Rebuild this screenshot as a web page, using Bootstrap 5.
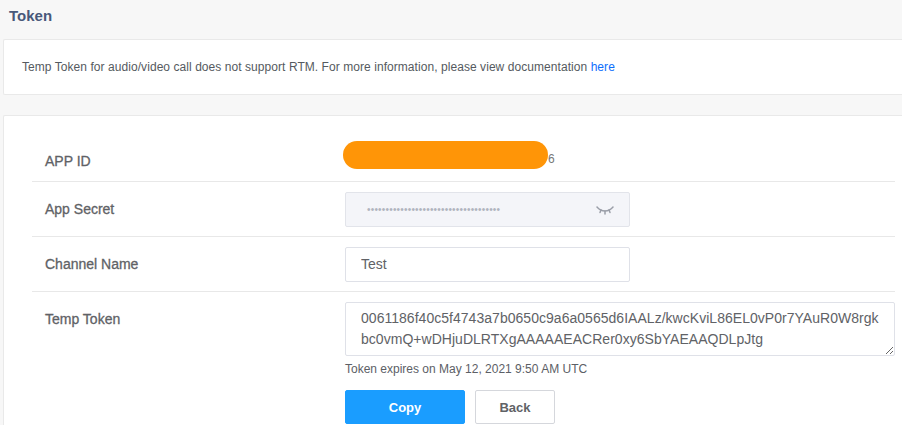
<!DOCTYPE html>
<html lang="en">
<head>
<meta charset="utf-8">
<title>Token</title>
<link href="https://cdn.jsdelivr.net/npm/bootstrap@5.3.0/dist/css/bootstrap.min.css" rel="stylesheet">
<style>
html, body { height: 425px; overflow: hidden; }
body { background: #f7f7f7; font-family: "Liberation Sans", Arial, sans-serif; color: #606266; font-size: 14px; }
.page-title { font-size: 15px; line-height: 18px; font-weight: 700; color: #48587a; margin: 0; padding: 7px 0 14px 9px; }
.panel { background: #fff; border: 1px solid #e9e9e9; border-right: 0; margin-left: 3px; border-radius: 2px 0 0 2px; }
.notice { height: 56px; padding-left: 18px; font-size: 12px; letter-spacing: .06px; color: #555a60; margin-bottom: 20px; }
.notice a { color: #0d6efd; text-decoration: none; }
.form-panel { padding: 16px 7px 0 28px; height: 320px; }
.form-line { display: flex; border-bottom: 1px solid #e8e8e8; }
.form-line:last-child { border-bottom: 0; }
.line-id { height: 50px; }
.line-field { height: 55px; padding-top: 10px; }
.line-token { padding-top: 10px; }
.field-label { width: 313px; flex: none; padding-left: 13px; font-size: 14px; font-weight: 400; -webkit-text-stroke: .3px #5f6266; color: #5f6266; line-height: 34px; }
.line-id .field-label { padding-top: 12px; }
.field-body { flex: 1 1 0; min-width: 0; }
.id-value { position: relative; font-size: 12px; color: #777; line-height: 14px; padding-top: 20px; padding-left: 203px; }
.id-mask { position: absolute; left: -2px; top: 9px; width: 205px; height: 28px; background: #ff9507; border-radius: 14px; }
.text-field.form-control { width: 285px; height: 35px; border: 1px solid #dfe1e8; border-radius: 2px; padding: 0 15px 2px; font-size: 14px; color: #606266; }
.secret-field { width: 285px; height: 35px; background: #f4f5f9; border: 1px solid #e2e4ea; border-radius: 2px; padding: 0 15px 0 21px; }
.secret-dots { font-size: 10px; letter-spacing: .2px; color: #b0b4be; line-height: 1; font-family: "Liberation Sans", sans-serif; }
.token-area.form-control { width: 550px; height: 54px; min-height: 54px; border: 1px solid #dfe1e8; border-radius: 2px; padding: 5px 15px; font-size: 14px; letter-spacing: .03px; line-height: 21px; color: #606266; overflow: hidden; }
.expiry { font-size: 12px; line-height: 14px; color: #5c6066; margin: 6px 0 14px; }
.act-btn { height: 34px; border-radius: 2px; font-size: 13px; font-weight: 700; padding: 1px 0 0; line-height: 32px; }
.copy-btn { width: 120px; background: #1a9dff; border: 1px solid #1a9dff; color: #fff; }
.back-btn { width: 80px; background: #fff; border: 1px solid #d5d7dc; color: #606266; margin-left: 2px; }
</style>
</head>
<body>
<h1 class="page-title">Token</h1>
<div class="panel notice d-flex align-items-center">
  <span>Temp Token for audio/video call does not support RTM. For more information, please view documentation <a href="#">here</a></span>
</div>
<div class="panel form-panel">
  <div class="form-line line-id">
    <div class="field-label">APP ID</div>
    <div class="field-body id-value">6<span class="id-mask"></span></div>
  </div>
  <div class="form-line line-field">
    <div class="field-label">App Secret</div>
    <div class="field-body">
      <div class="secret-field d-flex align-items-center justify-content-between">
        <span class="secret-dots">••••••••••••••••••••••••••••••••••••</span>
        <svg width="18" height="10" viewBox="0 0 18 10" fill="none" stroke="#9a9ea8" stroke-width="1.5" stroke-linecap="round"><path d="M1 2c2.500 3 5 4 8 4s5.500-1 8-4"/><path d="M5 5l-1 2.500M9 6v3M13 5l1 2.500"/></svg>
      </div>
    </div>
  </div>
  <div class="form-line line-field">
    <div class="field-label">Channel Name</div>
    <div class="field-body"><input class="form-control text-field" type="text" value="Test"></div>
  </div>
  <div class="form-line line-token">
    <div class="field-label">Temp Token</div>
    <div class="field-body">
      <textarea class="form-control token-area">0061186f40c5f4743a7b0650c9a6a0565d6IAALz/kwcKviL86EL0vP0r7YAuR0W8rgkbc0vmQ+wDHjuDLRTXgAAAAAEACRer0xy6SbYAEAAQDLpJtg</textarea>
      <p class="expiry">Token expires on May 12, 2021 9:50 AM UTC</p>
      <div class="d-flex gap-2">
        <button class="btn act-btn copy-btn" type="button">Copy</button>
        <button class="btn act-btn back-btn" type="button">Back</button>
      </div>
    </div>
  </div>
</div>
<script src="https://cdn.jsdelivr.net/npm/bootstrap@5.3.0/dist/js/bootstrap.bundle.min.js"></script>
</body>
</html>
